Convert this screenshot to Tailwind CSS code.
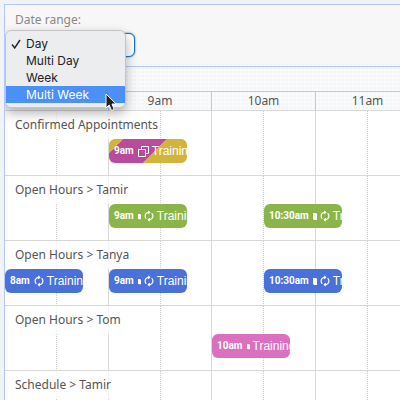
<!DOCTYPE html>
<html lang="en">
<head>
<meta charset="utf-8">
<meta name="viewport" content="width=device-width, initial-scale=1">
<title>Schedule</title>
<script src="https://cdn.jsdelivr.net/npm/@tailwindcss/browser@4"></script>
</head>
<body class="h-screen overflow-hidden bg-[#f2f3f6] pl-1 pt-1 text-[#555] font-['Noto_Sans',sans-serif]">
<svg class="hidden">
  <symbol id="repeat" viewBox="0 0 11 12"><path d="M2.600 9.200C.7 7.400.7 4.500 2.600 2.900 3.500 2.100 4.600 2 6 2M4.600.4 6.300 2 4.600 3.700M8.400 2.800c1.900 1.800 1.900 4.700 0 6.300-.9.800-2 .9-3.400.9M6.400 11.600 4.700 10l1.700-1.700" fill="none" stroke="#fff" stroke-width="1.300"/></symbol>
  <symbol id="copy" viewBox="0 0 11 11"><path d="M3.500 3V.5h7v7H8M.5 3.500h7v7h-7z" fill="none" stroke="#fff"/></symbol>
  <symbol id="tag" viewBox="0 0 4 7"><path d="M0 0h3l1 1v6H1L0 6z" fill="#fff"/></symbol>
</svg>
<main class="h-full overflow-hidden border-l border-t border-[#b5c7fb]">
  <form class="relative flex h-[61px] flex-col gap-1 bg-[#f7f7f7] px-[10px] pt-[6px]">
    <label for="range" class="text-xs leading-[18px] text-[#888]">Date range:</label>
    <select id="range" class="h-6 w-[120px] shrink-0 appearance-none rounded-md border border-[#1b75bb] bg-white px-2 text-xs text-transparent shadow-[0_0_2px_#1b75bb]">
      <option>Day</option><option>Multi Day</option><option>Week</option><option>Multi Week</option>
    </select>
    <ul role="listbox" aria-label="Date range" class="absolute left-0 top-[25px] z-30 w-[121px] rounded-md border border-[#c4c4c4] bg-[#ecedef] py-1 font-['Inter',sans-serif] text-xs leading-[17px] text-[#222] shadow-[0_5px_12px_rgba(0,0,0,0.3)]">
      <li role="option" aria-selected="true" class="relative pl-5">
        <svg class="absolute left-[5px] top-1 h-[10px] w-[10px]" viewBox="0 0 10 10"><path d="M1 5.500 3.700 9 9 1" fill="none" stroke="#222" stroke-width="1.400"/></svg>Day</li>
      <li role="option" class="pl-5">Multi Day</li>
      <li role="option" class="pl-5">Week</li>
      <li role="option" class="bg-[#4b8ff8] pl-5 text-white">Multi Week</li>
    </ul>
    <svg class="absolute left-[100px] top-[88px] z-40 h-[19px] w-3" viewBox="0 0 12 19"><path d="M1 1v14l3.200-3 2.300 5.500 2.700-1.100L7 11h4.200z" fill="#222" stroke="#fff"/></svg>
  </form>
  <table class="w-[415px] table-fixed border-separate border-spacing-0">
    <colgroup><col class="w-0"><col class="w-[52px]"><col class="w-[52px]"><col class="w-[52px]"><col class="w-[51px]"><col class="w-[52px]"><col class="w-[52px]"><col class="w-[52px]"><col class="w-[52px]"></colgroup>
    <thead class="bg-[#f9fafc] bg-[radial-gradient(#eceef4_0.500px,transparent_1px)] bg-[size:4px_4px] text-xs">
      <tr><td colspan="9" class="h-[26px] border-y border-[#b5c7fb] p-0"></td></tr>
      <tr class="h-[19px] leading-[18px] *:border-b *:border-r *:border-b-[#d8d8d8] *:border-r-[#b5c7fb] *:p-0 *:font-normal">
        <th colspan="3" scope="col" aria-label="8am"></th><th colspan="2" scope="col">9am</th><th colspan="2" scope="col">10am</th><th colspan="2" scope="col">11am</th>
      </tr>
    </thead>
    <tbody class="bg-white text-xs *:relative *:h-[65px] [&_td]:border-b [&_td]:border-r [&_td]:border-[#d8d8d8] [&_td]:p-0 [&_td]:pt-7 [&_td]:align-top [&_td:nth-of-type(odd)]:border-r-[#cfcfcf] [&_td:nth-of-type(odd)]:[border-right-style:dotted] [&_th]:p-0 [&_th]:font-normal [&_th>span]:absolute [&_th>span]:left-0 [&_th>span]:top-0 [&_th>span]:z-10 [&_th>span]:h-7 [&_th>span]:bg-white/75 [&_th>span]:pl-[10px] [&_th>span]:leading-7 [&_th>span]:whitespace-nowrap [&_a]:relative [&_a]:z-20 [&_a]:flex [&_a]:h-6 [&_a]:w-[78px] [&_a]:items-center [&_a]:gap-[3px] [&_a]:overflow-hidden [&_a]:rounded-md [&_a]:pl-[5px] [&_a]:whitespace-nowrap [&_a]:text-white [&_a]:font-['Liberation_Sans',sans-serif] [&_a]:text-xs [&_b]:mr-px [&_b]:font-['Roboto',sans-serif] [&_b]:text-[10px] [&_svg]:shrink-0">
      <tr><th scope="row"><span>Confirmed Appointments</span></th><td></td><td></td>
        <td><a href="#" class="bg-[linear-gradient(135deg,#d1b43c_0_10px,#b94b9c_10px_41px,#d1b43c_41px)]"><b>9am</b><svg class="size-[11px]"><use href="#copy"/></svg><span>Training</span></a></td>
        <td></td><td></td><td></td><td></td><td></td></tr>
      <tr><th scope="row"><span>Open Hours &gt; Tamir</span></th><td></td><td></td>
        <td><a href="#" class="bg-[#8bb548]"><b>9am</b><svg class="h-[7px] w-[3px]"><use href="#tag"/></svg><svg class="h-3 w-[10px]"><use href="#repeat"/></svg><span>Training</span></a></td>
        <td></td><td></td>
        <td><a href="#" class="bg-[#8bb548]"><b>10:30am</b><svg class="h-[7px] w-1"><use href="#tag"/></svg><svg class="h-3 w-[10px]"><use href="#repeat"/></svg><span>Training</span></a></td>
        <td></td><td></td></tr>
      <tr><th scope="row"><span>Open Hours &gt; Tanya</span></th>
        <td><a href="#" class="bg-[#4a70d9]"><b>8am</b><svg class="h-3 w-[10px]"><use href="#repeat"/></svg><span>Training</span></a></td><td></td>
        <td><a href="#" class="bg-[#4a70d9]"><b>9am</b><svg class="h-[7px] w-[3px]"><use href="#tag"/></svg><svg class="h-3 w-[10px]"><use href="#repeat"/></svg><span>Training</span></a></td>
        <td></td><td></td>
        <td><a href="#" class="bg-[#4a70d9]"><b>10:30am</b><svg class="h-[7px] w-1"><use href="#tag"/></svg><svg class="h-3 w-[10px]"><use href="#repeat"/></svg><span>Training</span></a></td>
        <td></td><td></td></tr>
      <tr><th scope="row"><span>Open Hours &gt; Tom</span></th><td></td><td></td><td></td><td></td>
        <td><a href="#" class="bg-[#d970c0]"><b>10am</b><svg class="h-[7px] w-[3px]"><use href="#tag"/></svg><span>Training</span></a></td>
        <td></td><td></td><td></td></tr>
      <tr><th scope="row"><span>Schedule &gt; Tamir</span></th><td></td><td></td><td></td><td></td><td></td><td></td><td></td><td></td></tr>
    </tbody>
  </table>
</main>
</body>
</html>
